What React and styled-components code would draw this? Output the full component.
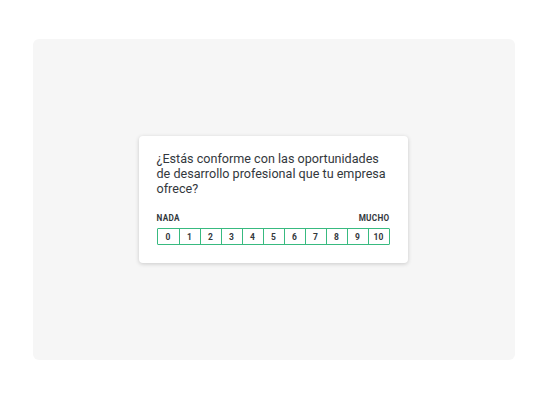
import React from 'react'
import styled, { createGlobalStyle } from 'styled-components'

const GlobalStyle = createGlobalStyle`
    html, body {
        margin: 0;
        padding: 0;
        background: #ffffff;
    }
    body {
        font-family: Roboto, "Liberation Sans", sans-serif;
    }
`

const Page = styled.div`
    width: 547px;
    height: 400px;
    padding: 39px 32px 40px 33px;
    box-sizing: border-box;
`

const Panel = styled.div`
    height: 100%;
    background: #f6f6f6;
    border-radius: 6px;
    display: flex;
    align-items: center;
    justify-content: center;
`

const Card = styled.div`
    width: 269px;
    box-sizing: border-box;
    background: #ffffff;
    border-radius: 4px;
    box-shadow: 0 1px 4px rgba(0, 0, 0, 0.18);
    padding: 15px 18px 18px;
    margin-right: 2px;
`

const Question = styled.p`
    margin: 0;
    font-size: 12.6px;
    line-height: 15px;
    color: #33383d;
`

const Labels = styled.div`
    display: flex;
    justify-content: space-between;
    margin-top: 17px;
    font-size: 8.2px;
    font-weight: 700;
    letter-spacing: 0.3px;
    color: #33383d;
`

const Scale = styled.div`
    display: grid;
    grid-template-columns: repeat(11, 1fr);
    margin-top: 5px;
    border: 1.5px solid #38ba80;
    border-radius: 1px;
`

const Cell = styled.div`
    height: 15.5px;
    display: flex;
    align-items: center;
    justify-content: center;
    font-size: 8.5px;
    font-weight: 700;
    color: #33383d;
    border-left: ${p => (p.first ? 'none' : '1.5px solid #38ba80')};
`

export default function App() {
    const values = Array.from({ length: 11 }, (_, i) => i)
    return (
        <>
            <GlobalStyle />
            <Page>
                <Panel>
                    <Card>
                        <Question>
                            ¿Estás conforme con las oportunidades de desarrollo profesional que tu empresa ofrece?
                        </Question>
                        <Labels>
                            <span>NADA</span>
                            <span>MUCHO</span>
                        </Labels>
                        <Scale>
                            {values.map(v => (
                                <Cell key={v} first={v === 0}>{v}</Cell>
                            ))}
                        </Scale>
                    </Card>
                </Panel>
            </Page>
        </>
    )
}
